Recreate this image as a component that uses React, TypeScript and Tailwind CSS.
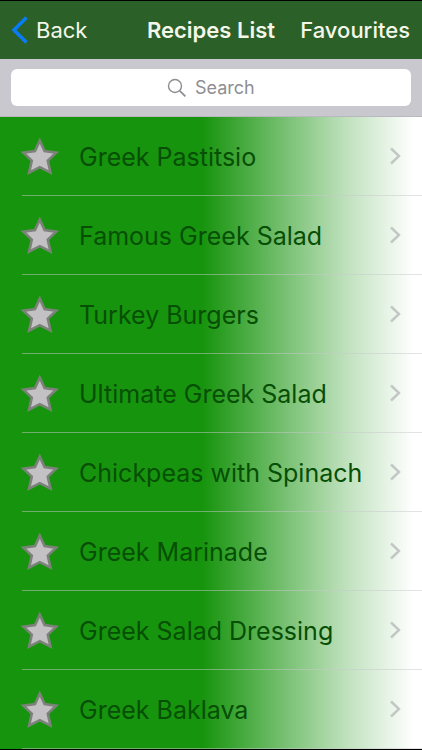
import React from "react";

const recipes = [
  { id: 1, title: "Greek Pastitsio" },
  { id: 2, title: "Famous Greek Salad" },
  { id: 3, title: "Turkey Burgers" },
  { id: 4, title: "Ultimate Greek Salad" },
  { id: 5, title: "Chickpeas with Spinach" },
  { id: 6, title: "Greek Marinade" },
  { id: 7, title: "Greek Salad Dressing" },
  { id: 8, title: "Greek Baklava" },
];

const Star = ({ filled }: { filled: boolean }) => (
  <svg width="40" height="40" viewBox="0 0 40 40" aria-hidden="true">
    <path
      d="M19.8 4.6 L24.6 15 L36.2 16.6 L27.8 24.6 L30.5 36.6 L19.8 31.2 L9.1 36.6 L11.8 24.6 L3.4 16.6 L15 15 Z"
      fill={filled ? "#ffd34d" : "#c3c1c3"}
      stroke="#7c827a"
      strokeWidth="2.6"
    />
  </svg>
);

const App = () => {
  const [search, setSearch] = React.useState("");
  const [favourites, setFavourites] = React.useState<number[]>([]);

  const toggleFavourite = (id: number) => {
    if (favourites.includes(id)) {
      setFavourites(favourites.filter((favourite) => favourite !== id));
    } else {
      setFavourites([...favourites, id]);
    }
  };

  return (
    <div className="min-h-screen bg-black pt-px font-[Inter,sans-serif]">
      <header className="grid h-[58px] grid-cols-[1fr_auto_1fr] items-center bg-[#2b6128] px-3 text-[22px] text-[#f4f6ea]">
        <button type="button" className="flex items-center gap-2 justify-self-start">
          <svg width="16" height="28" viewBox="0 0 16 28" fill="none" aria-hidden="true">
            <path d="M14.5 1.5 L2 14 L14.5 26.5" stroke="#0a7cf5" strokeWidth="3.6" />
          </svg>
          Back
        </button>
        <h1 className="font-semibold">Recipes List</h1>
        <button type="button" className="justify-self-end font-medium">
          Favourites
        </button>
      </header>
      <form
        className="border-b border-[#b9b8bf] bg-[#c9c8ce] px-[11px] py-[10px]"
        onSubmit={(e) => e.preventDefault()}
      >
        <label className="flex h-[37px] items-center justify-center gap-2 rounded-md bg-white">
          <svg width="20" height="20" viewBox="0 0 20 20" fill="none" stroke="#8e8e93" aria-hidden="true">
            <circle cx="8" cy="8" r="6.5" strokeWidth="1.4" />
            <path d="M12.8 12.8 L18.4 18.4" strokeWidth="1.8" />
          </svg>
          <input
            type="text"
            name="search"
            aria-label="Search"
            placeholder="Search"
            value={search}
            onChange={(e) => setSearch(e.target.value)}
            className="w-[60px] text-lg text-black outline-none placeholder:text-[#8e8e93]"
          />
        </label>
      </form>
      <ul className="bg-linear-to-r/srgb from-[#17940d] from-48% via-[#bfe1bd] via-82% to-white to-98%">
        {recipes
          .filter((recipe) => recipe.title.toLowerCase().includes(search.toLowerCase()))
          .map((recipe) => (
            <li key={recipe.id} className="pl-5">
              <div className="flex h-[78px] items-center pr-[21px]">
                <button
                  type="button"
                  aria-label={`Favourite ${recipe.title}`}
                  onClick={() => toggleFavourite(recipe.id)}
                >
                  <Star filled={favourites.includes(recipe.id)} />
                </button>
                <a href={`#recipe-${recipe.id}`} className="ml-[19px] flex flex-1 items-center justify-between">
                  <span className="whitespace-nowrap pt-0.5 text-[25px] leading-9 text-[#064f05]">{recipe.title}</span>
                  <svg width="12" height="18" viewBox="0 0 12 18" fill="none" aria-hidden="true">
                    <path d="M2 1.5 L10 9 L2 16.5" stroke="#c3c6c5" strokeWidth="2.4" />
                  </svg>
                </a>
              </div>
              <div className="ml-0.5 h-px bg-[#c8c7cc]/50" />
            </li>
          ))}
      </ul>
    </div>
  );
};

export default App;
